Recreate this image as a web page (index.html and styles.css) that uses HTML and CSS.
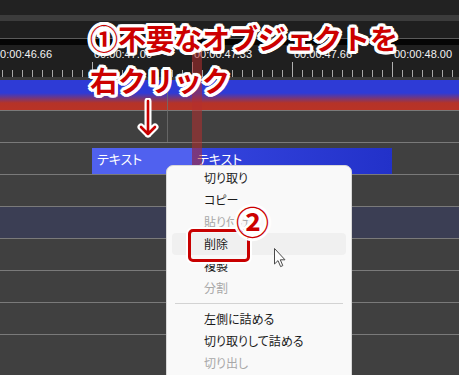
FILE: index.html
```html
<!DOCTYPE html>
<html lang="ja">
<head>
<meta charset="utf-8">
<link rel="stylesheet" href="styles.css">
</head>
<body>
<div class="app">
  <div class="topbar"></div>
  <div class="band"></div>
  <div class="toolbar"></div>
  <div class="scroll"></div>
  <div class="ruler">
    <div class="seg"><div class="lbl">00:00:46.66</div><div class="ticks"></div></div>
    <div class="seg"><div class="lbl">00:00:47.00</div><div class="ticks"></div></div>
    <div class="seg"><div class="lbl">00:00:47.33</div><div class="ticks"></div></div>
    <div class="seg"><div class="lbl">00:00:47.66</div><div class="ticks"></div></div>
    <div class="seg"><div class="lbl">00:00:48.00</div><div class="ticks"></div></div>
  </div>
  <div class="rsep"></div>
  <div class="lane"></div>
  <div class="tracks">
    <div class="row"></div>
    <div class="row clips">
      <div class="clip clip-a">テキスト</div>
      <div class="clip clip-b">テキスト</div>
    </div>
    <div class="row"></div>
    <div class="row sel"></div>
    <div class="row"></div>
    <div class="row"></div>
    <div class="row"></div>
    <div class="row"></div>
  </div>
</div>

<div class="vline"></div>
<div class="playhead"></div>

<div class="menu">
  <div class="item">切り取り</div>
  <div class="item">コピー</div>
  <div class="item off">貼り付け</div>
  <div class="item hover">削除</div>
  <div class="item">複製</div>
  <div class="item off">分割</div>
  <div class="sep"></div>
  <div class="item">左側に詰める</div>
  <div class="item">切り取りして詰める</div>
  <div class="item off">切り出し</div>
</div>

<div class="redbox"></div>
<div class="num2">②</div>

<svg class="cursor" width="13" height="20" viewBox="0 0 13 20">
  <path d="M0.5 0.5 L0.5 16 L4 12.6 L6.6 18.6 L8.8 17.6 L6.3 11.8 L11 11.8 Z" fill="#fdfdfd" stroke="#4a4a4a" stroke-width="1" stroke-linejoin="round"/>
</svg>

<div class="note">
  <div class="line">①不要なオブジェクトを</div>
  <div class="line">右クリック</div>
</div>

<svg class="arrow" width="24" height="44" viewBox="0 0 24 44">
  <g fill="none" stroke-linecap="round" stroke-linejoin="round">
    <path d="M12 3 L12 36 M5 29 L12 36 L19 29" stroke="#ffffff" stroke-width="7"/>
    <path d="M12 3 L12 36 M5 29 L12 36 L19 29" stroke="#c80000" stroke-width="2.6"/>
  </g>
</svg>
</body>
</html>
```
FILE: styles.css
```css
html, body {
  margin: 0;
  padding: 0;
}
body {
  width: 459px;
  height: 375px;
  overflow: hidden;
  background: #404040;
  position: relative;
  font-family: "Liberation Sans", Arial, sans-serif;
}
.app {
  display: flex;
  flex-direction: column;
  width: 459px;
  overflow: hidden;
}
.topbar { height: 15px; background: #222222; }
.band { height: 6px; background: #3c3c3c; }
.toolbar { height: 17px; background: #1f1f1f; }
.scroll { height: 6px; border-top: 1px solid #5a5a5a; background: #050505; }
.ruler {
  height: 32px;
  background: #1f1f1f;
  display: flex;
  margin-left: -8px;
  padding-top: 3px;
  box-sizing: border-box;
}
.seg {
  width: 100px;
  flex-shrink: 0;
  display: flex;
  flex-direction: column;
  gap: 1px;
}
.lbl {
  height: 13px;
  line-height: 13px;
  font-size: 11px;
  color: #f2f2f2;
  padding-left: 2px;
  white-space: nowrap;
}
.ticks {
  height: 15px;
  border-left: 1px solid #b0b0b0;
  background-image: repeating-linear-gradient(to right, transparent 0 9px, #a8a8a8 9px 10px);
  background-size: 100% 7px;
  background-position: left bottom;
  background-repeat: no-repeat;
}
.rsep { height: 3px; background: #3a3a3a; }
.lane {
  height: 30px;
  background: linear-gradient(to bottom, #2e3bd6 0, #2e3bd6 13px, #b53328 23px, #b93326 30px);
}
.tracks { display: flex; flex-direction: column; }
.row {
  height: 31px;
  border-top: 1px solid #7a7a7a;
  background: #404040;
  position: relative;
}
.row.sel { background: #3b3e54; }
.clips {
  display: flex;
  align-items: flex-end;
  padding-left: 92px;
}
.clip {
  height: 26px;
  box-sizing: border-box;
  padding-left: 5px;
  color: #ffffff;
  font-family: "Noto Sans CJK JP", sans-serif;
  font-feature-settings: "palt";
  font-size: 13px;
  line-height: 22px;
}
.clip-a { width: 100px; background: #5061ef; }
.clip-b { width: 200px; background: linear-gradient(to right, #3545df, #2231c9); }

.vline {
  position: absolute;
  left: 167px;
  top: 80px;
  width: 1px;
  height: 62px;
  background: rgba(110,110,110,0.8);
}
.playhead {
  position: absolute;
  left: 192px;
  top: 45px;
  width: 10px;
  height: 330px;
  background: rgba(180, 45, 45, 0.55);
}

.menu {
  position: absolute;
  left: 166px;
  top: 165px;
  width: 186px;
  height: 230px;
  box-sizing: border-box;
  background: #f9f9f9;
  border: 1px solid #d8d8d8;
  border-radius: 7px;
  padding: 1px 5px;
  font-family: "Noto Sans CJK JP", sans-serif;
  font-feature-settings: "palt";
  font-size: 12px;
  color: #1b1b1b;
}
.item {
  height: 22px;
  line-height: 22px;
  padding-left: 32px;
  border-radius: 4px;
  white-space: nowrap;
}
.item.off { color: #a8a8a8; }
.item.hover { background: #f0f0f0; }
.sep {
  height: 9px;
  margin: 0 3px;
  background: linear-gradient(#d3d3d3, #d3d3d3) center / 100% 1px no-repeat;
}

.redbox {
  position: absolute;
  left: 188px;
  top: 229px;
  width: 62px;
  height: 33px;
  box-sizing: border-box;
  border: 3px solid #c80000;
  border-radius: 5px;
  box-shadow: 0 0 0 2px #ffffff;
}
.num2 {
  position: absolute;
  left: 236px;
  top: 200px;
  font-family: "Noto Sans CJK JP", sans-serif;
  font-weight: 700;
  font-size: 33px;
  line-height: 42px;
  color: #cc0000;
  text-shadow: 3px 0 #fff, -3px 0 #fff, 0 3px #fff, 0 -3px #fff, 2px 2px #fff, -2px 2px #fff, 2px -2px #fff, -2px -2px #fff;
}
.cursor {
  position: absolute;
  left: 274px;
  top: 248px;
}
.note {
  position: absolute;
  left: 90px;
  top: 17px;
  font-family: "Noto Sans CJK JP", sans-serif;
  font-weight: 700;
  font-size: 28px;
  line-height: 42px;
  color: #cc0000;
  white-space: nowrap;
  text-shadow: 3px 0 #fff, -3px 0 #fff, 0 3px #fff, 0 -3px #fff, 2px 2px #fff, -2px 2px #fff, 2px -2px #fff, -2px -2px #fff, 3px 1.5px #fff, -3px 1.5px #fff, 3px -1.5px #fff, -3px -1.5px #fff, 1.5px 3px #fff, -1.5px 3px #fff, 1.5px -3px #fff, -1.5px -3px #fff;
}
.arrow {
  position: absolute;
  left: 136px;
  top: 98px;
}
```
